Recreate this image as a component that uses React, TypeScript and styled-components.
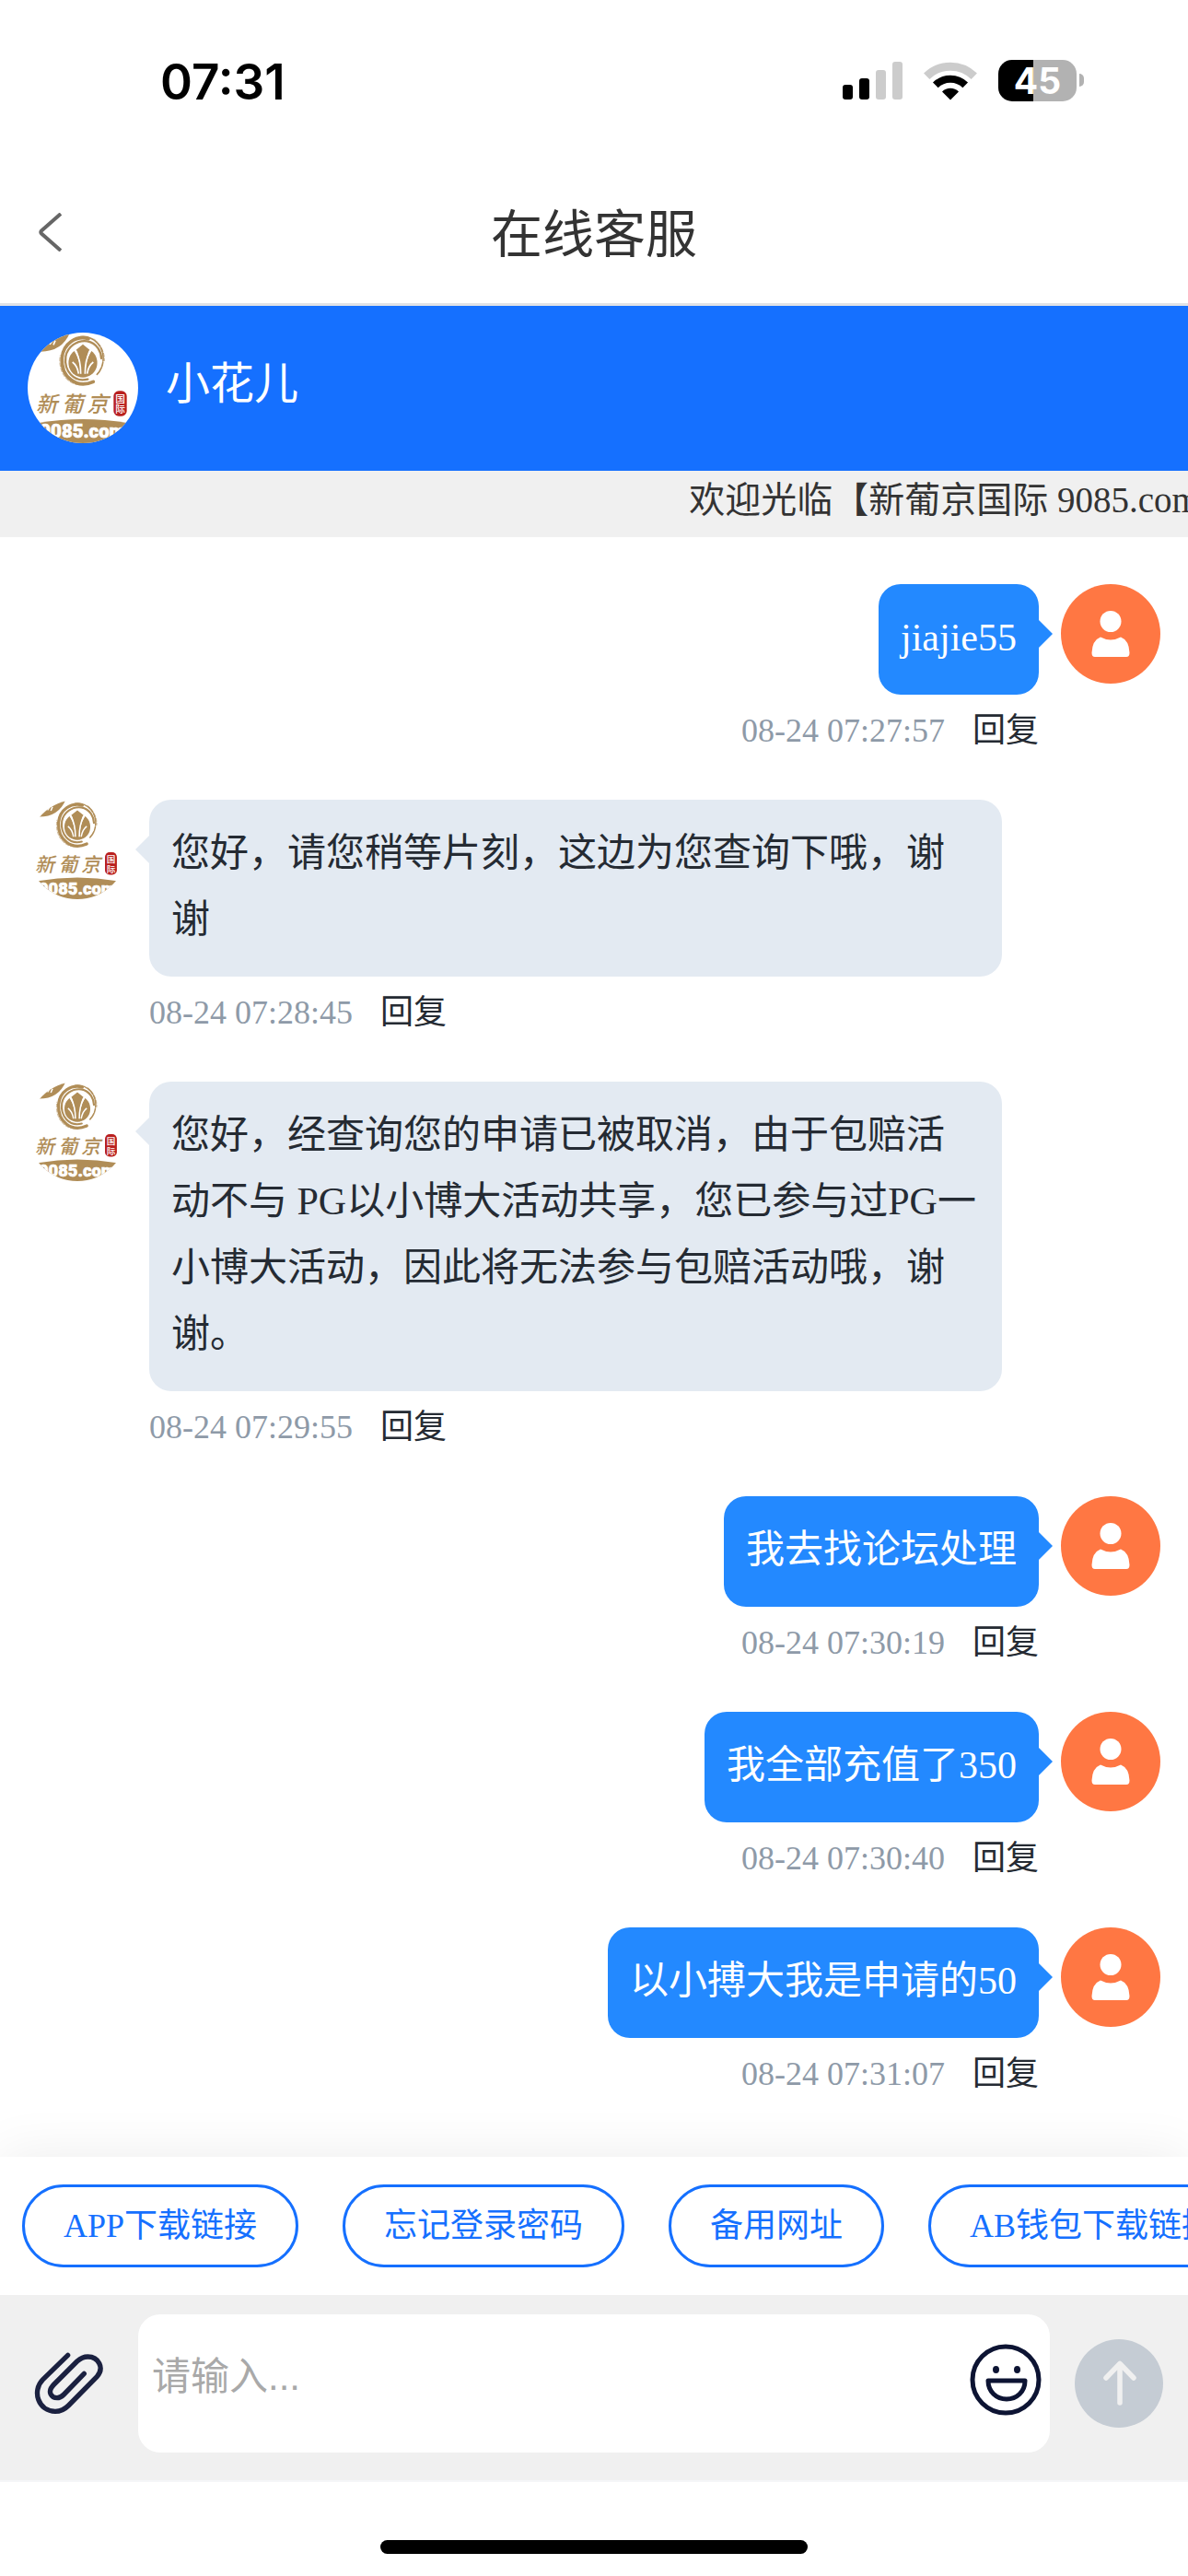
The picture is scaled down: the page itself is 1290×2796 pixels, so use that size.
import React, { useState } from "react";
import styled, { createGlobalStyle, css } from "styled-components";

const serif = `"Liberation Serif", "Noto Sans CJK SC", serif`;
const sans = `"Liberation Sans", "Noto Sans CJK SC", sans-serif`;

const GlobalStyle = createGlobalStyle`
  *, *::before, *::after { box-sizing: border-box; }
  body { margin: 0; background: #fff; color: #252b33; font-family: ${serif}; }
  button, textarea { margin: 0; padding: 0; border: 0; background: none; font: inherit; color: inherit; }
  button { cursor: pointer; }
  svg { display: block; }
`;

const Page = styled.div`
  display: flex;
  flex-direction: column;
  min-height: 100vh;
  overflow-x: hidden;
`;

const StatusBar = styled.div`
  display: flex;
  align-items: center;
  justify-content: space-between;
  height: 174px;
  padding: 0 113px 0 174px;
  color: #000;
`;

const Clock = styled.time`
  padding-top: 3px;
  font: 600 53px/60px Inter, sans-serif;
`;

const StatusIcons = styled.div`
  display: flex;
  align-items: center;
  gap: 23px;
`;

const Battery = styled.div`
  display: flex;
  align-items: center;
  gap: 3px;
`;

const BatteryBody = styled.span`
  width: 85px;
  border-radius: 15px;
  background: linear-gradient(90deg, #000 45%, #b2b2b2 45%);
  color: #fff;
  font: 700 39px/45px Inter, sans-serif;
  text-align: center;
`;

const BatteryNub = styled.span`
  width: 5px;
  height: 14px;
  border-radius: 0 7px 7px 0;
  background: #b2b2b2;
`;

const TitleBar = styled.header`
  display: grid;
  grid-template-columns: 1fr auto 1fr;
  align-items: center;
  height: 158px;
  padding: 0 30px;
  border-bottom: 3px solid #e0e2e6;
`;

const BackButton = styled.button`
  justify-self: start;
  padding: 12px;
  color: #666;
`;

const Title = styled.h1`
  margin: 0;
  padding-top: 6px;
  color: #333;
  font: 400 56px/80px ${sans};
`;

const AgentBar = styled.section`
  display: flex;
  gap: 30px;
  padding: 29px 30px 30px;
  background: #1570ff;
  color: #fff;
`;

const Avatar = styled.span<{ $size: number }>`
  flex: none;
  width: ${(p) => p.$size}px;
  height: ${(p) => p.$size}px;
  border-radius: 50%;
  overflow: hidden;
  background: #fff;
`;

const AgentName = styled.h2`
  margin: 0;
  font: 400 48px/112px ${sans};
`;

const Marquee = styled.div`
  padding: 2px 0 10px 58%;
  overflow: hidden;
  background: #f0f0f0;
  color: #333;
  font-size: 39px;
  line-height: 60px;
  white-space: nowrap;
`;

const Chat = styled.main`
  display: flex;
  flex: 1;
  flex-direction: column;
  gap: 54px;
  padding: 51px 0 69px;
`;

const Row = styled.article<{ $mine: boolean }>`
  display: flex;
  flex-direction: ${(p) => (p.$mine ? "row-reverse" : "row")};
  gap: 24px;
  padding: ${(p) => (p.$mine ? "0 30px 0 202px" : "0 202px 0 30px")};
`;

const Body = styled.div<{ $mine: boolean }>`
  display: flex;
  flex-direction: column;
  align-items: ${(p) => (p.$mine ? "flex-end" : "flex-start")};
  gap: 18px;
  min-width: 0;
`;

const Bubble = styled.p<{ $mine: boolean }>`
  position: relative;
  margin: 0;
  padding: 22px 24px 26px;
  border-radius: 24px;
  background: ${(p) => (p.$mine ? "#2389ff" : "#e3eaf2")};
  color: ${(p) => (p.$mine ? "#fff" : "#252b33")};
  font-size: 42px;
  line-height: 72px;

  &::after {
    content: "";
    position: absolute;
    top: 39px;
    border: 15px solid transparent;
    ${(p) =>
      p.$mine
        ? css`
            left: 100%;
            border-left-color: #2389ff;
            border-right-width: 0;
          `
        : css`
            right: 100%;
            border-right-color: #e3eaf2;
            border-left-width: 0;
          `}
  }
`;

const Meta = styled.footer`
  display: flex;
  gap: 30px;
  color: #8e9aa8;
  font-size: 36px;
  line-height: 42px;
`;

const Reply = styled.button`
  color: #252b33;
`;

const QuickBar = styled.nav`
  display: flex;
  gap: 48px;
  padding: 30px 24px;
  overflow-x: auto;
  scrollbar-width: none;
  background: #fff;
  box-shadow: 0 0 60px rgba(0, 0, 0, 0.08);
`;

const QuickLink = styled.button`
  flex: none;
  padding: 0 42px;
  border: 3px solid #1570ff;
  border-radius: 45px;
  color: #1570ff;
  font-size: 36px;
  line-height: 84px;
  white-space: nowrap;
`;

const Composer = styled.form`
  display: flex;
  align-items: center;
  gap: 27px;
  padding: 21px 27px 30px 36px;
  border-bottom: 2px solid #f5f6f8;
  background: #f0f0f0;
`;

const AttachButton = styled.button`
  flex: none;
  color: #1b2140;
`;

const InputBox = styled.label`
  display: flex;
  flex: 1;
  align-items: center;
  margin-left: 9px;
  padding: 0 9px 0 15px;
  border-radius: 24px;
  background: #fff;
`;

const Input = styled.textarea`
  flex: 1;
  height: 150px;
  padding: 38px 0;
  outline: 0;
  resize: none;
  font: 42px/60px ${sans};

  &::placeholder {
    color: #a9a9a9;
  }
`;

const EmojiButton = styled.button`
  padding-bottom: 8px;
  color: #0d1433;
`;

const SendButton = styled.button`
  flex: none;
`;

const HomeArea = styled.div`
  display: flex;
  justify-content: center;
  padding: 63px 0 24px;
`;

const HomeIndicator = styled.span`
  width: 36%;
  height: 15px;
  border-radius: 8px;
  background: #000;
`;

const SignalIcon = () => (
  <svg width="65" height="41" viewBox="0 0 65 41" aria-hidden="true">
    <rect x="0" y="25" width="11" height="16" rx="3" />
    <rect x="18" y="18" width="11" height="23" rx="3" />
    <rect x="36" y="9" width="11" height="32" rx="3" fill="#ccc" />
    <rect x="54" y="0" width="11" height="41" rx="3" fill="#ccc" />
  </svg>
);

const WifiIcon = () => (
  <svg width="58" height="43" viewBox="0 0 58 43" fill="none" aria-hidden="true">
    <path d="M3.2 16.8A36.7 36.7 0 0 1 54.8 16.8" stroke="#ccc" strokeWidth="9" />
    <path d="M12.8 26.4A23 23 0 0 1 45.2 26.4" stroke="#000" strokeWidth="8" />
    <path d="M29 42.5L20 33.4A13 13 0 0 1 38 33.4Z" fill="#000" />
  </svg>
);

const BackIcon = () => (
  <svg width="25" height="42" viewBox="0 0 25 42" fill="none" stroke="currentColor" strokeWidth="4" aria-hidden="true">
    <path d="M24 1L3 19.5Q1.500 21 3 22.500L24 41" />
  </svg>
);

const BrandLogo = ({ size }: { size: number }) => (
  <svg width={size} height={size} viewBox="0 0 360 360" aria-hidden="true">
    <path d="M0 62H42Q112 62 138 0H0Z" fill="#b08d57" />
    <path d="M72 38L80 28M84 40L90 26" stroke="#fff" strokeWidth="5" />
    <g fill="none" stroke="#b08d57" strokeLinecap="round">
      <path d="M214 160C160 184 108 146 112 82C116 36 158 8 198 20" strokeWidth="11" />
      <path d="M196 152C150 164 118 124 124 78C130 46 160 24 194 28C228 34 240 66 240 84" strokeWidth="7" />
      <path d="M172 14C210 8 242 38 246 76C248 100 240 124 224 138" strokeWidth="5" strokeDasharray="26 5 14 4" />
      <path d="M166 170C128 166 98 128 106 74M218 22C240 40 252 68 250 92" strokeWidth="2" strokeDasharray="12 6" />
    </g>
    <g fill="#b08d57">
      <path d="M180 38L202 56Q192 64 187 138H173Q168 64 158 56Z" />
      <path d="M152 60C126 78 126 124 158 140Q168 144 172 138C172 112 168 84 152 60Z" />
      <path d="M208 60C234 78 234 124 202 140Q192 144 188 138C188 112 192 84 208 60Z" />
      <path d="M146 128Q180 164 214 128Q180 140 146 128Z" />
    </g>
    <path
      d="M157 62C168 80 173 104 173 134M203 62C192 80 187 104 187 134M146 96Q162 108 166 134M214 96Q198 108 194 134"
      fill="none"
      stroke="#fff"
      strokeWidth="5"
    />
    <g
      fill="#b08d57"
      fontFamily="'Noto Sans CJK SC', sans-serif"
      fontSize="70"
      fontWeight="500"
      fontStyle="italic"
    >
      <text x="27" y="259">新</text>
      <text x="111" y="259">葡</text>
      <text x="193" y="259">京</text>
    </g>
    <rect x="280" y="190" width="43" height="82" rx="17" fill="#b9201f" />
    <g fill="#fff" fontFamily="'Noto Sans CJK SC', sans-serif" fontSize="32" fontWeight="500">
      <text x="286" y="227">国</text>
      <text x="286" y="262">际</text>
    </g>
    <path d="M36 294Q180 270 324 294V360H36Z" fill="#b08d57" />
    <text x="40" y="343" fill="#fff" stroke="#fff" strokeWidth="2" fontFamily="Roboto, sans-serif" fontSize="61" fontWeight="900">
      9085.com
    </text>
  </svg>
);

const UserIcon = () => (
  <svg width="108" height="108" viewBox="0 0 108 108" aria-hidden="true">
    <rect width="108" height="108" fill="#ff7743" />
    <circle cx="54" cy="40.500" r="11.500" fill="#fff" />
    <path d="M43 57.500Q54 63.500 65 57.500Q74 61 74.500 74.500Q74.500 79 71 79H37Q33.500 79 33.500 74.500Q34 61 43 57.500Z" fill="#fff" />
  </svg>
);

const PaperclipIcon = () => (
  <svg width="78" height="72" viewBox="50 63 234 216" fill="none" stroke="currentColor" strokeWidth="16" strokeLinecap="round" aria-hidden="true">
    <path d="M163 79L82 158C44 196 68 262 122 262C140 262 152 256 165 243L257 150C284 120 262 84 228 84C212 84 203 90 193 99L118 174C92 200 112 218 128 218C138 218 144 213 150 207L216 139" />
  </svg>
);

const EmojiIcon = () => (
  <svg width="78" height="78" viewBox="0 0 78 78" fill="none" stroke="currentColor" strokeWidth="5" aria-hidden="true">
    <circle cx="39" cy="39" r="36" />
    <path d="M20 40H60C60 52 51 60 40 60S20 52 20 40Z" strokeLinejoin="round" />
    <ellipse cx="28.500" cy="28" rx="3.500" ry="4" fill="currentColor" stroke="none" />
    <ellipse cx="51.500" cy="28" rx="3.500" ry="4" fill="currentColor" stroke="none" />
  </svg>
);

const SendIcon = () => (
  <svg width="96" height="96" viewBox="0 0 96 96" fill="none" aria-hidden="true">
    <circle cx="48" cy="48" r="48" fill="#c5ccd4" />
    <path d="M49 69V27M34 42L49 26.500L64 42" stroke="#f0f0f0" strokeWidth="5.500" strokeLinecap="round" strokeLinejoin="round" />
  </svg>
);

type Message = { mine: boolean; text: string; time: string };

const messages: Message[] = [
  { mine: true, text: "jiajie55", time: "08-24 07:27:57" },
  { mine: false, text: "您好，请您稍等片刻，这边为您查询下哦，谢谢", time: "08-24 07:28:45" },
  {
    mine: false,
    text: "您好，经查询您的申请已被取消，由于包赔活动不与 PG以小博大活动共享，您已参与过PG一小博大活动，因此将无法参与包赔活动哦，谢谢。",
    time: "08-24 07:29:55",
  },
  { mine: true, text: "我去找论坛处理", time: "08-24 07:30:19" },
  { mine: true, text: "我全部充值了350", time: "08-24 07:30:40" },
  { mine: true, text: "以小搏大我是申请的50", time: "08-24 07:31:07" },
];

const quickLinks = ["APP下载链接", "忘记登录密码", "备用网址", "AB钱包下载链接"];

export default function App() {
  const [draft, setDraft] = useState("");

  return (
    <Page lang="zh-CN">
      <GlobalStyle />
      <StatusBar>
        <Clock>07:31</Clock>
        <StatusIcons>
          <SignalIcon />
          <WifiIcon />
          <Battery>
            <BatteryBody>45</BatteryBody>
            <BatteryNub />
          </Battery>
        </StatusIcons>
      </StatusBar>

      <TitleBar>
        <BackButton type="button" aria-label="返回">
          <BackIcon />
        </BackButton>
        <Title>在线客服</Title>
      </TitleBar>

      <AgentBar>
        <Avatar $size={120}>
          <BrandLogo size={120} />
        </Avatar>
        <AgentName>小花儿</AgentName>
      </AgentBar>

      <Marquee>欢迎光临【新葡京国际 9085.com】</Marquee>

      <Chat>
        {messages.map((m) => (
          <Row key={m.time} $mine={m.mine}>
            <Avatar $size={108}>{m.mine ? <UserIcon /> : <BrandLogo size={108} />}</Avatar>
            <Body $mine={m.mine}>
              <Bubble $mine={m.mine}>{m.text}</Bubble>
              <Meta>
                <time>{m.time}</time>
                <Reply type="button">回复</Reply>
              </Meta>
            </Body>
          </Row>
        ))}
      </Chat>

      <QuickBar aria-label="快捷链接">
        {quickLinks.map((label) => (
          <QuickLink key={label} type="button">
            {label}
          </QuickLink>
        ))}
      </QuickBar>

      <Composer onSubmit={(e) => e.preventDefault()}>
        <AttachButton type="button" aria-label="附件">
          <PaperclipIcon />
        </AttachButton>
        <InputBox>
          <Input
            aria-label="请输入"
            placeholder="请输入..."
            value={draft}
            onChange={(e) => setDraft(e.target.value)}
          />
          <EmojiButton type="button" aria-label="表情">
            <EmojiIcon />
          </EmojiButton>
        </InputBox>
        <SendButton type="submit" aria-label="发送">
          <SendIcon />
        </SendButton>
      </Composer>

      <HomeArea>
        <HomeIndicator />
      </HomeArea>
    </Page>
  );
}
